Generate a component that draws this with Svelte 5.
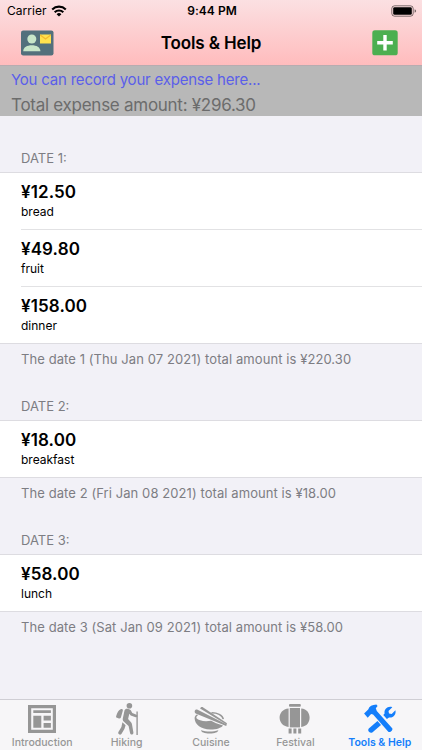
<script>
  let days = $state([
    {
      date: 'Thu Jan 07 2021',
      items: [
        { name: 'bread', amount: 12.5 },
        { name: 'fruit', amount: 49.8 },
        { name: 'dinner', amount: 158 }
      ]
    },
    { date: 'Fri Jan 08 2021', items: [{ name: 'breakfast', amount: 18 }] },
    { date: 'Sat Jan 09 2021', items: [{ name: 'lunch', amount: 58 }] }
  ])

  let activeTab = $state('Tools & Help')
  const tabs = ['Introduction', 'Hiking', 'Cuisine', 'Festival', 'Tools & Help']

  const sum = (items) => items.reduce((total, item) => total + item.amount, 0)
  const yen = (value) => '¥' + value.toFixed(2)

  let total = $derived(days.reduce((acc, day) => acc + sum(day.items), 0))
</script>

<div class="screen">
  <header>
    <div class="status">
      <div class="carrier">
        <span>Carrier</span>
        <svg width="16" height="12" viewBox="0 0 16 12">
          <path d="M1.2 4.4a9.8 9.8 0 0 1 13.6 0" fill="none" stroke="#000" stroke-width="2.1" />
          <path d="M3.7 7.2a6.1 6.1 0 0 1 8.6 0" fill="none" stroke="#000" stroke-width="2.1" />
          <path d="M8 11.6L5.6 9.2a3.4 3.4 0 0 1 4.8 0z" />
        </svg>
      </div>
      <span class="time">9:44 PM</span>
      <div class="battery">
        <svg width="26" height="12" viewBox="0 0 26 12">
          <rect x=".8" y=".8" width="21.4" height="10.4" rx="2.8" fill="none" stroke="#000" stroke-opacity=".5" />
          <rect x="2.2" y="2.2" width="18.6" height="7.6" rx="1.4" />
          <path d="M23.6 4.2q1.5.5 1.5 1.8t-1.5 1.8z" opacity=".55" />
        </svg>
      </div>
    </div>
    <nav class="titlebar">
      <button aria-label="Contact">
        <svg width="33" height="26" viewBox="0 0 33 26">
          <rect width="32.5" height="25" y=".4" rx="2.2" fill="#53707c" />
          <circle cx="10.8" cy="9" r="4.5" fill="#c8e6c9" />
          <path d="M2.2 21.2c0-4 4-6 8.6-6s8.6 2 8.6 6z" fill="#c8e6c9" />
          <rect x="19" y="4.5" width="11" height="9" fill="#ffe14d" />
          <path d="M19.3 5l5.2 4 5.2-4" fill="none" stroke="#f5b82e" stroke-width="1.2" />
        </svg>
      </button>
      <h1>Tools &amp; Help</h1>
      <button aria-label="Add expense">
        <svg width="26" height="26" viewBox="0 0 26 26">
          <rect x=".3" y=".3" width="25.4" height="25" rx="2.6" fill="#4caf50" />
          <path d="M13 5v15.6M5.2 12.8h15.6" stroke="#fff" stroke-width="3.4" />
        </svg>
      </button>
    </nav>
  </header>

  <section class="summary">
    <p class="hint">You can record your expense here...</p>
    <p class="total">Total expense amount: {yen(total)}</p>
  </section>

  <main>
    {#each days as day, i}
      <section class="day">
        <h2>DATE {i + 1}:</h2>
        <ul>
          {#each day.items as item}
            <li>
              <strong>{yen(item.amount)}</strong>
              <span>{item.name}</span>
            </li>
          {/each}
        </ul>
        <p>The date {i + 1} ({day.date}) total amount is {yen(sum(day.items))}</p>
      </section>
    {/each}
  </main>

  <footer>
    {#each tabs as tab}
      <button class="tab" class:active={tab === activeTab} onclick={() => (activeTab = tab)}>
        <svg width="34" height="34" viewBox="0 0 34 34" fill="currentColor">
          {#if tab === 'Introduction'}
            <path fill-rule="evenodd" d="M3 3h28v28H3zM6.2 6.2v21.6h21.6V6.2z" />
            <path d="M8.3 8.3h17.6v2.6H8.3zM8.3 13.8h8v12h-8zM18.6 13.8h7.3v4.6h-7.3zM18.6 21h7.3v4.8h-7.3z" />
          {:else if tab === 'Hiking'}
            <circle cx="19.4" cy="3.7" r="2.8" />
            <path d="M10.6 7.2c1.4-.5 2.6.2 2.2 1.6l-1.9 6.6c-.3 1-1.2 1.3-2 1L7 15.8c-.9-.3-1.1-1-.8-1.9 1-2.9 2.2-5.8 4.4-6.7z" />
            <path d="M14.5 8.5c.6-1.6 1.8-2 3.2-1.7 1.9.4 3.2 1.2 4 3.1l.6 1.2 4.2 1.6c1.8.8.9 3-.8 2.5l-5-1.8-1.4-1.6-1.2 5.3 2.9 3.1c.6.7.8 1.3 1 2.2l1.4 8c.2 2.3-2.7 2.8-3.3.8L18.6 24l-4.6-4.2c-1.3-1.2-1.5-2.3-1.1-3.9z" />
            <path d="M12.4 20.2l3.2 3-1.2 3.7-3 5c-1.2 1.8-4 .2-3-1.8l3-5.1z" />
            <path d="M26.4 9.6h1.4V33h-1.4z" />
          {:else if tab === 'Cuisine'}
            <path d="M6.1 6.6c.3-1.5 1.9-2 3.1-1.2L33 21.2l-.6 1.4z" />
            <path d="M.7 9.2c.2-1.6 1.7-2.2 2.9-1.5L32.8 22.6l-.6 1.5L1.7 11.4c-.7-.4-1.1-1.2-1-2.2z" />
            <path d="M17.5 10.8c5.5-.1 11 2 11.8 6.4" fill="none" stroke="currentColor" stroke-width="1.5" />
            <path d="M4.3 13.1c-1.7 1-2.2 2.1-1.8 3.2 2.2 2.4 7.9 3.5 14.7 2.4l4.3 2.3 7.5 2.4c-2.1 2.5-6 4-12.6 4C7 27.4.8 22.8.6 16.3c0-2.1 1-3.3 2.4-3.9z" />
            <path d="M7 28.2c5.1 1.6 12 1.7 17.3 0-.1 2-3.4 3.2-8.6 3.2s-8.5-1.2-8.7-3.2z" />
          {:else if tab === 'Festival'}
            <rect x="11" y="2" width="11.8" height="2.8" rx="1" />
            <rect x="11.8" y="6" width="10.2" height="19.4" />
            <path d="M10.6 6.4v18.5C4.7 24.6 1.6 20 1.6 15.6S4.7 6.7 10.6 6.4zM23.2 6.4v18.5c5.9-.3 8.4-4.9 8.4-9.3s-2.5-8.9-8.4-9.2z" />
            <path d="M10.6 26.4h3v5h-3zM15.4 26.4h3v5h-3zM20.2 26.4h3v5h-3z" />
          {:else}
            <path d="M1.1 11.5l4.1-3.9c1.1-3.3 4-4.8 8.2-5l1.2 1.4-1.8 2.3 1 2.7 15.4 17.3c1.2 1.6-2.3 5-3.9 3.4L10.1 12.4l-2-.3-3.4 3.6z" />
            <path d="M29.3 5.2l-3.8 3.7.5 2.6 2.7.5 3.7-3.8c1 4-1.9 7.9-6.4 7.3l-2.1 1.6-3.6-4 1.3-1.6c-.7-4.2 3.1-7.8 7.7-6.3z" />
            <path d="M14.5 19.1l3.5 3.8-8.7 7.5c-2.4 1.5-5.3-1.5-3.5-3.8z" />
          {/if}
        </svg>
        <span>{tab}</span>
      </button>
    {/each}
  </footer>
</div>

<style>
  :global(body) {
    margin: 0;
  }

  .screen {
    width: 422px;
    height: 750px;
    display: flex;
    flex-direction: column;
    overflow: hidden;
    background: #f2f1f7;
    color: #000;
    font-family: Inter, 'Liberation Sans', sans-serif;
  }

  h1, h2, p, ul {
    margin: 0;
    padding: 0;
    font-weight: 400;
  }

  button {
    padding: 0;
    border: none;
    background: none;
    font: inherit;
    cursor: pointer;
  }

  svg {
    display: block;
  }

  header {
    box-sizing: border-box;
    height: 66px;
    flex: none;
    border-bottom: 1px solid #b7acb0;
    background: linear-gradient(#fbe0e2, #ffbcbd);
  }

  .status {
    display: grid;
    grid-template-columns: 1fr auto 1fr;
    height: 21px;
    padding: 0 5px 0 7px;
    align-items: center;
    font-size: 12px;
  }

  .carrier {
    display: flex;
    align-items: center;
    gap: 4px;
    letter-spacing: 0.05px;
  }

  .time {
    font-weight: 600;
    letter-spacing: 0.05px;
  }

  .battery {
    justify-self: end;
  }

  .titlebar {
    display: grid;
    grid-template-columns: 1fr auto 1fr;
    height: 44px;
    padding: 0 24px;
    align-items: center;
  }

  .titlebar button:last-child {
    justify-self: end;
  }

  .titlebar button:first-child {
    justify-self: start;
    margin-left: -3px;
  }

  h1 {
    font-size: 17px;
    font-weight: 600;
    letter-spacing: -0.12px;
  }

  .summary {
    box-sizing: border-box;
    height: 50px;
    flex: none;
    padding: 1px 11px 0;
    background: #b8b8b8;
    line-height: 25px;
  }

  .hint {
    color: #5b5fe9;
    font-size: 15px;
    letter-spacing: -0.21px;
  }

  .total {
    color: #6c6c6c;
    font-size: 17px;
    line-height: 27px;
    letter-spacing: -0.27px;
  }

  main {
    flex: 1;
    min-height: 0;
    padding-top: 26px;
  }

  .day {
    color: #7d7d83;
    font-size: 13px;
  }

  h2 {
    height: 30px;
    padding-left: 21px;
    font-size: 13px;
    line-height: 33px;
  }

  ul {
    border-top: 1px solid #dddce1;
    border-bottom: 1px solid #dddce1;
    margin-bottom: -1px;
    background: #fff;
    list-style: none;
  }

  li {
    box-sizing: border-box;
    display: flex;
    flex-direction: column;
    height: 57px;
    margin-left: 21px;
    padding-top: 8px;
    border-bottom: 1px solid #e2e2e4;
    color: #000;
  }

  li:last-child {
    height: 56px;
    border-bottom: none;
  }

  li strong {
    font-size: 17px;
    font-weight: 600;
    line-height: 22px;
    letter-spacing: 0.1px;
  }

  li span {
    font-size: 12px;
    line-height: 17px;
  }

  .day p {
    height: 47px;
    padding-left: 21px;
    line-height: 32px;
    letter-spacing: 0.08px;
  }

  footer {
    box-sizing: border-box;
    display: grid;
    grid-template-columns: repeat(5, 1fr);
    height: 51px;
    flex: none;
    border-top: 1px solid #cfced4;
    background: #f7f6f8;
  }

  .tab {
    display: flex;
    flex-direction: column;
    align-items: center;
    padding-top: 2px;
    color: #969696;
    font-size: 10.5px;
    font-weight: 500;
    line-height: 13px;
    white-space: nowrap;
  }

  .active {
    color: #147efb;
    font-weight: 600;
  }
</style>
